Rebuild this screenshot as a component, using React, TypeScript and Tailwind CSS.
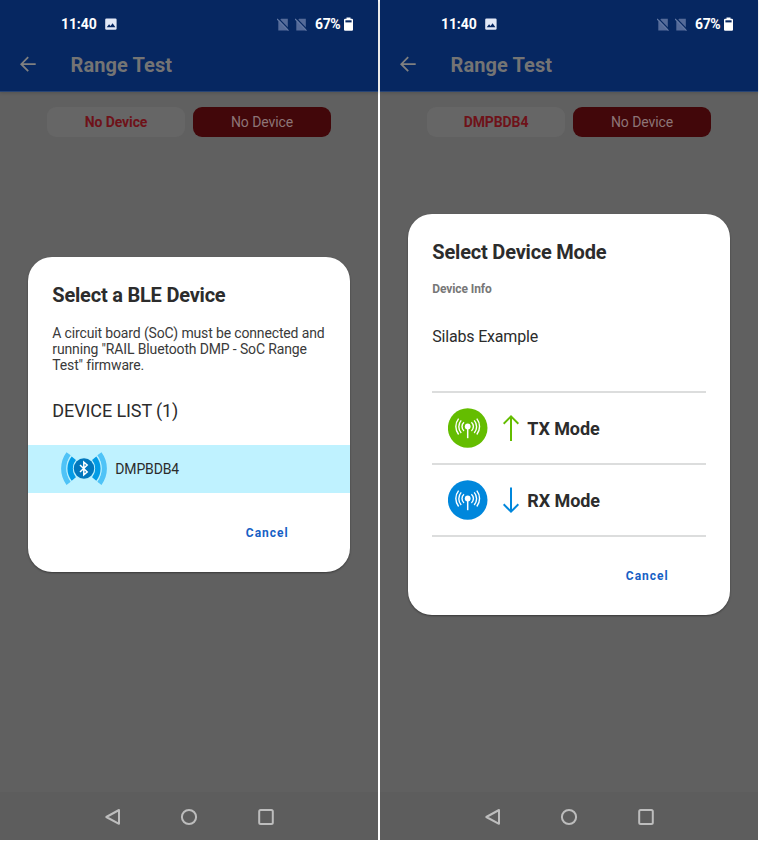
import type { ReactNode } from "react";

function StatusBar() {
  return (
    <div className="flex h-[48px] items-center pl-[61px] text-[14px] leading-[16px] font-medium text-white">
      <span className="w-[44px] font-bold tracking-[-0.1px] whitespace-nowrap">11:40</span>
      <svg className="h-[12px] w-[12px]" viewBox="0 0 12 12">
        <rect x="0.2" y="0.5" width="11.4" height="11.2" rx="1.3" fill="#e3e9f7" />
        <path d="M1.7 9.2 4.1 6.3 5.5 8 7.6 5.2 10.4 9.2Z" fill="#062761" />
      </svg>
      <div className="ml-[160px] flex w-[38px] gap-[6px]">
        <NoSim />
        <NoSim />
      </div>
      <span className="w-[29px] font-bold tracking-[-0.4px] whitespace-nowrap">67%</span>
      <svg className="h-[14px] w-[9px]" viewBox="0 0 9 14">
        <path d="M2.5 0.5h4v1.3h1.4q1.1 0 1.1 1.1v9.8q0 1.1-1.1 1.1H1.100Q0 13.8 0 12.7V2.900q0-1.100 1.100-1.100h1.400Z" fill="#fff" />
        <path d="M1.400 3.300h6.200v2.100H1.400Z" fill="#062761" />
      </svg>
    </div>
  );
}

function NoSim() {
  return (
    <svg className="h-[13px] w-[12px] shrink-0" viewBox="0 0 12 13">
      <path d="M4.2 0.7h6.6v11.800H1.300V3.600Z" fill="#556b99" />
      <path d="M1.300 0.400 12.300 11.800" stroke="#062761" strokeWidth="1.3" />
      <path d="M0.100 1 11.500 12.600" stroke="#6479a4" strokeWidth="1.100" />
    </svg>
  );
}

function NavBar() {
  return (
    <div className="flex h-[48px] items-center bg-[#5d5d5d] pt-px pl-[104px]">
      <svg className="h-[18px] w-[180px]" viewBox="0 0 180 18" fill="none" stroke="#bdbdbd" strokeWidth="2" strokeLinejoin="round">
        <path d="M15 2v13.800L2.300 9Z" />
        <circle cx="85" cy="9" r="7.100" />
        <rect x="155.200" y="2" width="13.600" height="14" rx="1.500" />
      </svg>
    </div>
  );
}

function Phone({ device, children }: { device: string; children: ReactNode }) {
  return (
    <div className="relative flex h-[840px] w-[378px] shrink-0 flex-col bg-[#606060]">
      <header className="h-[92px] border-b border-[#274474] bg-[#062761] shadow-[0_1px_3px_rgba(0,0,0,0.15)]">
        <StatusBar />
        <div className="flex h-[34px] items-center pl-[20px]">
          <svg className="mr-[34.5px] h-[18px] w-[16px]" viewBox="0 0 16 18" fill="none" stroke="#808080" strokeWidth="1.8">
            <path d="M15.700 8.200H1.200M8.200 1.200 1.200 8.200l7 7" />
          </svg>
          <h1 className="text-[20px] font-bold tracking-[0.1px] whitespace-nowrap text-[#747474]">Range Test</h1>
        </div>
      </header>
      <div className="flex flex-1 items-start gap-[8px] pt-[15px] pl-[46.5px] text-[14px] leading-[31px]">
        <div className="h-[30px] w-[138px] rounded-[9px] bg-[#666666] pl-px text-center font-bold tracking-[-0.1px] text-[#6e1219]">{device}</div>
        <div className="h-[30px] w-[138px] rounded-[9px] bg-[#42070a] pl-px text-center tracking-[-0.1px] text-[#8d7577]">No Device</div>
      </div>
      <NavBar />
      {children}
    </div>
  );
}

function BluetoothIcon() {
  return (
    <svg className="h-[34px] w-[48px]" viewBox="0 0 48 34" fill="none">
      <g stroke="#4fc3f7" strokeWidth="5.2">
        <path d="M8.600 1.800A24.800 24.800 0 0 0 8.600 31.400" />
        <path d="M39.400 1.800A24.800 24.800 0 0 1 39.400 31.400" />
      </g>
      <g stroke="#b9effd" strokeWidth="6.5">
        <path d="M13.500 5.700A17.800 17.800 0 0 0 13.500 27.500" />
        <path d="M34.500 5.700A17.800 17.800 0 0 1 34.500 27.500" />
      </g>
      <g stroke="#039be5" strokeWidth="5.400">
        <path d="M13.800 6.200A16.500 16.500 0 0 0 13.800 27" />
        <path d="M34.200 6.200A16.500 16.500 0 0 1 34.200 27" />
      </g>
      <circle cx="24" cy="16.500" r="10.900" fill="#b9effd" />
      <circle cx="24" cy="16.500" r="10.200" fill="#0277bd" />
      <path d="M20 13 27.200 20 23.800 22.800V10.200L27.200 13 20 20" stroke="#fff" strokeWidth="1.500" />
    </svg>
  );
}

function ModeRow({ label, color, down }: { label: string; color: string; down?: boolean }) {
  return (
    <div className="flex h-[72px] items-center border-b-2 border-[#dcdddd] pl-[16px]">
      <svg className="h-[40px] w-[40px]" viewBox="0 0 40 40" fill="none" stroke="#fff">
        <circle cx="19.700" cy="20" r="19.800" fill={color} stroke="none" />
        <circle cx="19.700" cy="18.500" r="2.900" fill="#fff" stroke="none" />
        <path d="M19.700 19v11.200" strokeWidth="1.500" />
        <g strokeWidth="1.400">
          <path d="M16 14.300a5.600 5.600 0 0 0 0 8.600M23.400 14.300a5.600 5.600 0 0 1 0 8.600" />
          <path d="M13.200 12.400a9.500 9.500 0 0 0 0 12.600M26.200 12.400a9.500 9.500 0 0 1 0 12.600" />
          <path d="M10.600 10.600a12.800 12.800 0 0 0 0 15.900M28.800 10.600a12.800 12.800 0 0 1 0 15.900" />
        </g>
      </svg>
      <svg className="ml-[15px] h-[28px] w-[16px]" viewBox="0 0 16 28" fill="none" stroke={color} strokeWidth="2">
        <path d={down ? "M8 1.500v24M.6 18.300 8 25.700l7.400-7.400" : "M8 27V2M.6 9.700 8 2.300l7.400 7.400"} />
      </svg>
      <span className="ml-[8px] pt-[2px] text-[18px] font-bold tracking-[-0.07px] whitespace-nowrap">{label}</span>
    </div>
  );
}

const dialogClass =
  "ml-[28.3px] w-[321.4px] overflow-hidden rounded-[24px] bg-white text-[#2c2c2c] shadow-[0_1px_2px_rgba(0,0,0,0.4)]";

export default function App() {
  return (
    <main className="flex h-[841px] w-[759px] gap-[2px] overflow-hidden bg-white font-['Roboto',sans-serif]">
      <Phone device="No Device">
        <div className="absolute inset-0 pt-[256.7px]">
          <section className={`${dialogClass} h-[315.6px]`}>
            <div className="px-[24px] pt-[26px]">
              <h2 className="text-[20px] leading-[24px] font-bold tracking-[-0.21px] whitespace-nowrap">Select a BLE Device</h2>
              <p className="mt-[18px] text-[14px] leading-[16px] tracking-[-0.145px] whitespace-nowrap text-[#3a3a3a]">
                A circuit board (SoC) must be connected and
                <br />
                running "RAIL Bluetooth DMP - SoC Range
                <br />
                Test" firmware.
              </p>
              <h3 className="mt-[26px] text-[18px] leading-[24px] tracking-[-0.1px] whitespace-nowrap">DEVICE LIST (1)</h3>
            </div>
            <div className="mt-[22px] flex h-[48px] items-center bg-[#bff2ff] pl-[32px] text-[14px]">
              <BluetoothIcon />
              <span className="ml-[7px] pt-[2px] tracking-[-0.15px] whitespace-nowrap">DMPBDB4</span>
            </div>
            <button className="mt-[32.500px] ml-[217.500px] block text-[12px] leading-[16px] font-bold tracking-[1px] text-[#1660c5]">Cancel</button>
          </section>
        </div>
      </Phone>
      <Phone device="DMPBDB4">
        <div className="absolute inset-0 pt-[213.7px]">
          <section className={`${dialogClass} h-[401.6px]`}>
            <div className="px-[24px] pt-[26px]">
              <h2 className="text-[20px] leading-[24px] font-bold tracking-[-0.19px] whitespace-nowrap">Select Device Mode</h2>
              <p className="mt-[17px] text-[12px] leading-[16px] font-bold tracking-[-0.1px] whitespace-nowrap text-[#777777]">Device Info</p>
              <p className="mt-[30px] text-[16px] leading-[20px] tracking-[-0.19px] whitespace-nowrap">Silabs Example</p>
              <div className="mt-[44px] border-t-2 border-[#dcdddd]">
                <ModeRow label="TX Mode" color="#64bd00" />
                <ModeRow label="RX Mode" color="#0087dc" down />
              </div>
            </div>
            <button className="mt-[31.500px] ml-[217.500px] block text-[12px] leading-[16px] font-bold tracking-[1px] text-[#1660c5]">Cancel</button>
          </section>
        </div>
      </Phone>
    </main>
  );
}
